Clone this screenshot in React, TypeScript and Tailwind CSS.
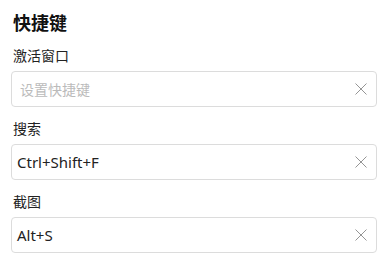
import React from "react";

const fields = [
  { label: "激活窗口", value: "" },
  { label: "搜索", value: "Ctrl+Shift+F" },
  { label: "截图", value: "Alt+S" },
];

function XIcon() {
  return (
    <svg width="12" height="12" viewBox="0 0 12 12" className="shrink-0">
      <path d="M0.5 0.5 L11.5 11.5 M11.5 0.5 L0.5 11.5" stroke="#959595" strokeWidth="1" fill="none" />
    </svg>
  );
}

export default function App() {
  return (
    <div
      className="w-[384px] h-[263px] bg-white pl-[11px] pr-[7px] pt-[10px] text-[#222]"
      style={{ fontFamily: '"Noto Sans", "Noto Sans CJK SC", sans-serif' }}
    >
      <div className="h-[26px] leading-[26px] text-[18px] font-bold pl-[2px] text-[#111]">快捷键</div>
      <div className="mt-[10px]">
        {fields.map((f) => (
          <div key={f.label} className="mb-[12px]">
            <div className="h-[20px] leading-[20px] text-[14px] pl-[2px] text-[#222]">{f.label}</div>
            <div className="mt-[5px] h-[36px] rounded-[4px] border border-[#dcdcdc] flex items-center pl-[5px] pr-[9px]">
              {f.value ? (
                <div className="flex-1 text-[15px] text-[#222]">{f.value}</div>
              ) : (
                <div className="flex-1 text-[14px] text-[#bbbbbb] pl-[3px]">设置快捷键</div>
              )}
              <XIcon />
            </div>
          </div>
        ))}
      </div>
    </div>
  );
}
